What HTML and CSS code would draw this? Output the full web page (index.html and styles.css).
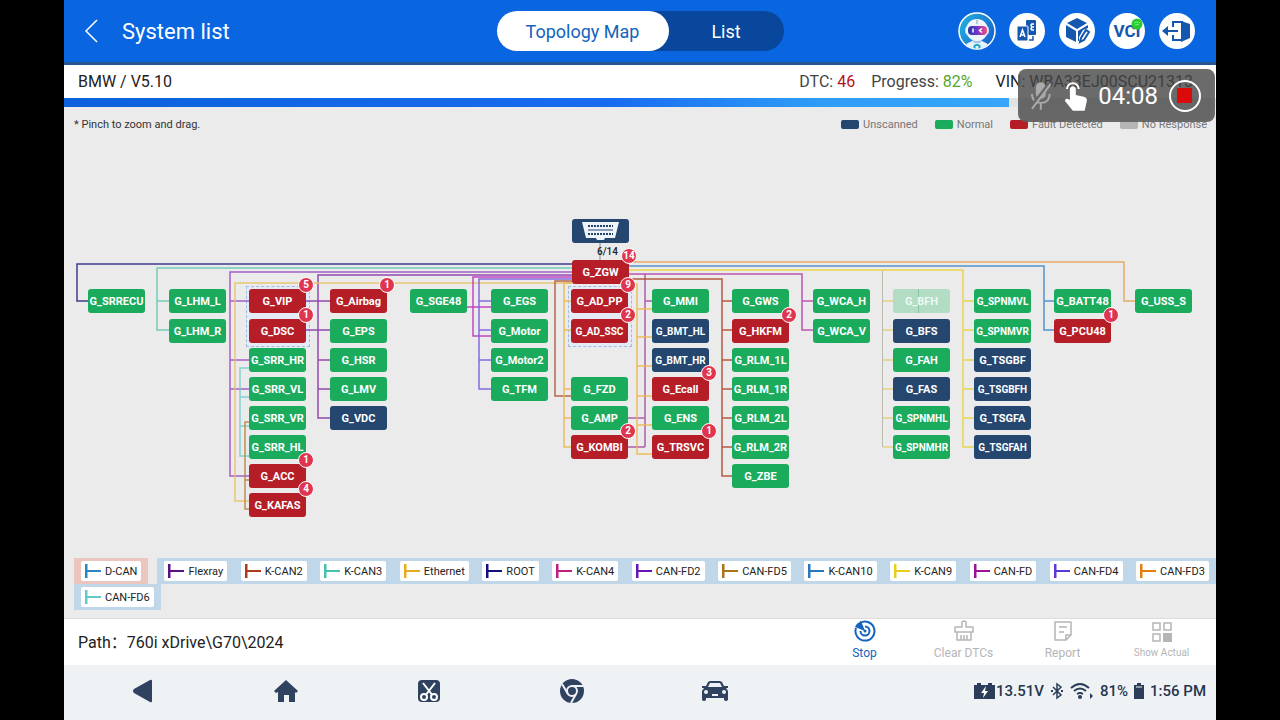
FILE: index.html
```html
<!DOCTYPE html>
<html lang="en">
<head>
  <meta charset="UTF-8" />
  <title>System list</title>
  <link rel="stylesheet" href="styles.css">
</head>
<body>
  <div class="screen">
    <header class="topbar">
      <div class="topbar-left">
        <button class="back" aria-label="Back">
          <svg width="14" height="24" viewBox="0 0 14 24"><path d="M13 1 L2 12 L13 23" fill="none" stroke="#fff" stroke-width="1.500"/></svg>
        </button>
        <h1>System list</h1>
      </div>
      <div class="tabs">
        <button class="tab active">Topology Map</button>
        <button class="tab">List</button>
      </div>
      <div class="tools">
        <button class="tool" aria-label="Assistant">
          <svg viewBox="0 0 38 38">
            <defs>
              <linearGradient id="sky" x1="0" y1="0" x2="1" y2="0.6"><stop offset="0" stop-color="#22b5dc"/><stop offset="1" stop-color="#1767cf"/></linearGradient>
              <linearGradient id="visor"><stop offset="0" stop-color="#2439a8"/><stop offset="0.5" stop-color="#7435ce"/><stop offset="1" stop-color="#fb4e79"/></linearGradient>
              <clipPath id="face"><circle cx="19" cy="19" r="17.500"/></clipPath>
            </defs>
            <circle cx="19" cy="19" r="18" fill="url(#sky)" stroke="#fff" stroke-width="1.500"/>
            <g clip-path="url(#face)">
              <path d="M5 38 Q6 30 19 28 Q32 30 33 38 Z" fill="#e8f2fc"/>
              <path d="M14 28 H24 L22 31 H16 Z" fill="#a9c5e4"/>
              <rect x="7" y="14" width="24" height="9" rx="4" fill="#c6dcf3"/>
              <ellipse cx="19" cy="18" rx="11" ry="11" fill="#f0f5fd"/>
              <rect x="10" y="14" width="19" height="9" rx="4" fill="url(#visor)"/>
              <path d="M15 16.500 V20.500 M24 16.500 L21.500 18.500 L24 20.500" stroke="#fff" stroke-width="1.500" fill="none"/>
              <path d="M19 8 V12" stroke="#a7bedb" stroke-width="1.500"/>
              <path d="M16.500 37 V34 Q19 31.500 21.500 34 V37" stroke="#18a8c6" stroke-width="2" fill="none"/>
            </g>
          </svg>
        </button>
        <button class="tool" aria-label="Translate">
          <svg viewBox="0 0 38 38">
            <circle cx="19" cy="19" r="18" fill="#fff"/>
            <rect x="18" y="8" width="10" height="15" rx="1" fill="#1557ae"/>
            <path d="M26 12 H24 Q22 13 24 15 H26 M24 15 Q22 17 24 18 H26" fill="none" stroke="#fff" stroke-width="1.500"/>
            <rect x="9" y="14" width="11" height="15" rx="1" fill="#1557ae" stroke="#fff"/>
            <path d="M12 25 L14.500 18 L17 25 M13 23 H16" fill="none" stroke="#fff" stroke-width="1.500"/>
            <path d="M21 28 H25 V24" fill="none" stroke="#1557ae" stroke-width="1.500"/>
          </svg>
        </button>
        <button class="tool" aria-label="Edit module">
          <svg viewBox="0 0 38 38">
            <circle cx="19" cy="19" r="18" fill="#fff"/>
            <path d="M9 11 L19 6 L29 11 L19 17 Z M8 13 L18 19 V30 L8 25 Z M20 19 L30 13 V16 L25 18 L21 25 V29 H20 Z" fill="#1557ae"/>
            <path d="M28 18 L31 20 L26 28 L22 30 L23 26 Z" fill="none" stroke="#1557ae" stroke-width="2"/>
          </svg>
        </button>
        <button class="tool" aria-label="VCI">
          <svg viewBox="0 0 38 38">
            <circle cx="19" cy="19" r="18" fill="#fff"/>
            <text class="vci" x="19" y="25" text-anchor="middle">VCI</text>
            <circle cx="29" cy="12" r="5.500" fill="#24cd2c"/>
            <path d="M26 11 Q29 9 32 11 M27 13 Q29 12 31 13" fill="none" stroke="#7bea7f"/>
          </svg>
        </button>
        <button class="tool" aria-label="Exit">
          <svg viewBox="0 0 38 38">
            <circle cx="19" cy="19" r="18" fill="#fff"/>
            <path d="M4 19 L10 14 V18 H20 V20 H10 V24 Z" fill="#1557ae"/>
            <path d="M15 15 V10 H25 M15 23 V28 H25" fill="none" stroke="#1557ae" stroke-width="2"/>
            <path d="M23 9 L32 12 V26 L23 30 Z" fill="#1557ae"/>
          </svg>
        </button>
      </div>
    </header>

    <div class="info">
      <span class="vehicle">BMW / V5.10</span>
      <span class="dtc">DTC: <b class="red">46</b></span>
      <span class="progress-text">Progress: <b class="green">82%</b></span>
      <span class="vin">VIN: WBA33EJ00SCU21313</span>
    </div>
    <div class="progress"><div class="progress-fill" style="width: 82%"></div></div>

    <main class="map">
      <div class="hint-row">
        <span class="hint">* Pinch to zoom and drag.</span>
        <span class="key"><i class="swatch unscanned"></i>Unscanned</span>
        <span class="key"><i class="swatch normal"></i>Normal</span>
        <span class="key"><i class="swatch fault"></i>Fault Detected</span>
        <span class="key"><i class="swatch none"></i>No Response</span>
      </div>

      <div class="canvas" id="canvas">
        <div class="group group-left"></div>
        <div class="group group-mid"></div>
        <svg class="wires" width="1152" height="416" viewBox="64 141 1152 416">
          <!-- left side buses -->
          <path stroke="#2b2a83" stroke-width="1.500" d="M572 264 H77 V301 H89"/>
          <path stroke="#67c9b0" d="M572 268 H157 V330 H169 M157 301 H169"/>
          <path stroke="#9b50c4" stroke-width="1.500" d="M572 272 H230 V476 H250 M230 301 H250 M230 360 H250 M230 389 H250"/>
          <path stroke="#8a35a8" stroke-width="1.500" d="M572 275 H318 V418 H330 M306 301 H330 M306 330 H330 M318 360 H330 M318 389 H330"/>
          <path stroke="#e9c268" d="M572 283 H235 V501 H250"/>
          <path stroke="#78cfcb" d="M250 368 H240 V456 H250 M240 397 H250 M240 426 H250"/>
          <path stroke="#b98441" d="M250 422 H245 V509 H250 M245 480 H250"/>
          <path stroke="#bd35bd" stroke-width="1.500" d="M572 277 H473 V336 H491 M467 307 H491"/>
          <path stroke="#7a5ddb" d="M572 279 H479 V389 H491 M479 301 H491 M479 330 H491 M479 360 H491"/>
          <path stroke="#b0583c" d="M572 281 H555 V396 H572"/>
          <path stroke="#eab74f" d="M572 283 H564 V447 H572 M564 301 H572 M564 330 H572 M564 389 H572 M564 418 H572"/>
          <!-- right side buses -->
          <path stroke="#e6a35a" d="M628 262 H1124 V301 H1136"/>
          <path stroke="#4388c8" d="M628 266 H1044 V330 H1055 M1044 301 H1055"/>
          <path stroke="#e8d968" stroke-width="2" d="M628 270 H963 V447 H975 M963 301 H975 M963 330 H975 M963 360 H975 M963 389 H975 M963 418 H975"/>
          <path stroke="#b7b6a6" stroke-width="1" d="M882.500 271 V447"/>
          <path stroke="#e3cf75" d="M883 301 H894 M883 330 H894 M883 360 H894 M883 389 H894 M883 418 H894 M883 447 H894"/>
          <path stroke="#b844ac" d="M628 274 H802 V330 H813 M802 301 H813"/>
          <path stroke="#a34fa4" d="M645 274 V447 M645 301 H653 M628 418 H645 M628 447 H645"/>
          <path stroke="#b3492f" d="M628 279 H722 V476 H733 M722 301 H733 M722 330 H733 M722 360 H733 M722 389 H733 M722 418 H733 M722 447 H733"/>
          <path stroke="#edb84c" stroke-width="1.500" d="M628 284 H637 V454 H653 M637 309 H653 M637 337 H653 M637 366 H653 M637 396 H653 M637 425 H653"/>
          <path stroke="#91a6ae" d="M600 243 V261"/>
        </svg>
        <button class="node unscanned" style="left: 508px; top: 78px" aria-label="OBD port">
          <svg width="37" height="18" viewBox="0 0 37 18">
            <path d="M0 0 H37 L33 16 H23 L22 18 H15 L14 16 H4 Z" fill="#eef4fa"/>
            <path d="M6 4 H31 M6 12 H31" stroke="#23456c" stroke-width="2" stroke-dasharray="2 1"/>
            <path d="M6 8 H31" stroke="#23456c"/>
          </svg>
        </button>
        <span class="pins">6/14</span>
      </div>

      <div class="buses">
        <div class="bus-row">
          <div class="bus-group can" id="dcan"></div>
          <div class="bus-group wide" id="busTop"></div>
        </div>
        <div class="bus-row">
          <div class="bus-group" id="busBottom"></div>
        </div>
      </div>
    </main>

    <div class="pathbar">
      <span class="path">Path：760i xDrive\G70\2024</span>
      <div class="actions">
        <button class="action on">
          <svg width="22" height="22" viewBox="0 0 22 22" fill="none" stroke="#1463bd" stroke-width="2">
            <path d="M6 3 A9.500 9.500 0 1 1 2 8"/><path d="M11 6.500 A4.500 4.500 0 1 1 6.500 11"/>
            <path d="M11 11 L1 7 Q3 3 7 1 Z" fill="#1463bd" stroke="none"/><circle cx="11" cy="11" r="1.500" fill="#1463bd" stroke="none"/>
          </svg>
          Stop
        </button>
        <button class="action">
          <svg width="22" height="22" viewBox="0 0 22 22" fill="none" stroke="#b5b5b5" stroke-width="1.500">
            <path d="M9 7 V2 Q11 0 13 2 V7 H20 V12 H2 V7 Z M4 12 V20 H18 V12 M8 15 V20 M11 15 V20 M14 15 V20" stroke-linejoin="round"/>
          </svg>
          Clear DTCs
        </button>
        <button class="action">
          <svg width="22" height="22" viewBox="0 0 22 22" fill="none" stroke="#b5b5b5" stroke-width="1.500">
            <path d="M3 2 H19 V15 L14 20 H3 Z M14 20 V15 H19 M7 7 H15 M7 12 H12" stroke-linejoin="round"/>
          </svg>
          Report
        </button>
        <button class="action small">
          <svg width="22" height="22" viewBox="0 0 22 22" fill="none" stroke="#b5b5b5" stroke-width="1.500">
            <path d="M2 3 H9 V10 H2 Z M13 3 H20 V10 H13 Z M2 14 H9 V21 H2 Z"/><path d="M12 13 H21 V22 H12 Z" fill="#b5b5b5" stroke="none"/>
          </svg>
          Show Actual
        </button>
      </div>
    </div>

    <nav class="navbar">
      <button class="nav-btn" aria-label="Back"><svg viewBox="0 0 28 28"><path d="M4 14 Q4 13 5 12 L21 3 Q23 2 23 4 V24 Q23 26 21 25 L5 16 Q4 15 4 14 Z" fill="#2f425f"/></svg></button>
      <button class="nav-btn" aria-label="Home"><svg viewBox="0 0 28 28"><path d="M14 3 L26 14 L24 16 L23 15 V25 H17 V18 H12 V25 H6 V15 L4 16 L2 14 Z" fill="#2f425f"/></svg></button>
      <button class="nav-btn" aria-label="Screenshot"><svg viewBox="0 0 28 28"><rect x="3" y="3" width="22" height="22" rx="4" fill="#2f425f"/><path d="M8 6 L18 19 M20 6 L10 19" stroke="#fff" stroke-width="2"/><g fill="#2f425f" stroke="#fff" stroke-width="2"><circle cx="9" cy="20" r="3"/><circle cx="19" cy="20" r="3"/></g></svg></button>
      <button class="nav-btn" aria-label="Browser"><svg viewBox="0 0 28 28"><circle cx="14" cy="14" r="12" fill="#2f425f"/><circle cx="14" cy="14" r="5" fill="none" stroke="#eff2f5" stroke-width="2"/><path d="M14 9 H25 M10 17 L4 7 M18 17 L13 26" stroke="#eff2f5" stroke-width="2"/></svg></button>
      <button class="nav-btn" aria-label="Vehicle"><svg viewBox="0 0 28 28"><path d="M7 5 Q8 4 10 4 H18 Q20 4 21 5 L23 9 H27 V11 H25 L27 14 V23 Q25 25 23 23 V21 H5 V23 Q3 25 1 23 V14 L3 11 H1 V9 H5 Z" fill="#2f425f"/><path d="M9 6 H19 L21 10 H7 Z" fill="#eff2f5"/><circle cx="5" cy="15" r="2" fill="#eff2f5"/><circle cx="23" cy="15" r="2" fill="#eff2f5"/><path d="M11 18 H17" stroke="#eff2f5" stroke-width="2"/></svg></button>
      <div class="status">
        <svg width="21" height="18" viewBox="0 0 21 18"><path d="M0 3 H3 V1 H7 V3 H14 V1 H18 V3 H21 V17 H0 Z" fill="#2b3d58"/><path d="M12 4 L7 11 H10 L9 16 L14 9 H11 Z" fill="#fff"/></svg>
        <span class="volts">13.51V</span>
        <svg class="bt" width="14" height="18" viewBox="0 0 14 18"><path d="M3 5 L11 13 L7 16 V2 L11 5 L3 13" fill="none" stroke="#2b3d58" stroke-width="1.500"/><path d="M1 9 H3 M11 9 H13" stroke="#2b3d58" stroke-width="2"/></svg>
        <svg class="wifi" width="24" height="18" viewBox="0 0 24 18"><path d="M1 6 Q10 -2 19 6 M4 9 Q10 4 16 9 M7 12 Q10 10 13 12" fill="none" stroke="#2b3d58" stroke-width="2"/><circle cx="10" cy="15" r="2" fill="#2b3d58"/><path d="M20 11 L23 14 L20 17 Z" fill="#2b3d58"/></svg>
        <span>81%</span>
        <svg class="battery" width="10" height="18" viewBox="0 0 10 18"><path d="M3 1 H7 V3 H10 V17 H0 V3 H3 Z" fill="#2b3d58"/><path d="M2 5 H8" stroke="#eff2f5"/></svg>
        <span>1:56 PM</span>
      </div>
    </nav>

    <div class="recorder">
      <svg class="mic" width="24" height="30" viewBox="0 0 24 30" fill="none" stroke="#aaa" stroke-width="2"><rect x="8" y="2" width="8" height="15" rx="4" fill="#aaa"/><path d="M3 13 Q3 22 12 22 Q21 22 21 13 M12 22 V29"/><path d="M22 1 L2 27" stroke="#666" stroke-width="4"/><path d="M22 3 L3 28"/></svg>
      <svg class="tap" width="24" height="32" viewBox="0 0 24 32"><path d="M3 9 A6 6 0 0 1 15 9" fill="none" stroke="#fff" stroke-width="2"/><path d="M6 8 Q9 4 12 8 V15 L21 17 Q24 18 23 22 L21 31 H9 L1 21 Q1 17 6 20 Z" fill="#fff"/></svg>
      <span class="time">04:08</span>
      <button class="stop-rec" aria-label="Stop recording"><i></i></button>
    </div>
  </div>

  <script>
    // n = normal, f = fault, u = unscanned, b = being scanned
    const columns = [
      ["n G_SRRECU"],
      ["n G_LHM_L", "n G_LHM_R"],
      ["f G_VIP 5", "f G_DSC 1", "n G_SRR_HR", "n G_SRR_VL", "n G_SRR_VR", "n G_SRR_HL", "f G_ACC 1", "f G_KAFAS 4"],
      ["f G_Airbag 1", "n G_EPS", "n G_HSR", "n G_LMV", "u G_VDC"],
      ["n G_SGE48"],
      ["n G_EGS", "n G_Motor", "n G_Motor2", "n G_TFM"],
      ["f G_AD_PP 9", "f G_AD_SSC 2", null, "n G_FZD", "n G_AMP", "f G_KOMBI 2"],
      ["n G_MMI", "u G_BMT_HL", "u G_BMT_HR", "f G_Ecall 3", "n G_ENS", "f G_TRSVC 1"],
      ["n G_GWS", "f G_HKFM 2", "n G_RLM_1L", "n G_RLM_1R", "n G_RLM_2L", "n G_RLM_2R", "n G_ZBE"],
      ["n G_WCA_H", "n G_WCA_V"],
      ["b G_BFH", "u G_BFS", "n G_FAH", "u G_FAS", "n G_SPNMHL", "n G_SPNMHR"],
      ["n G_SPNMVL", "n G_SPNMVR", "u G_TSGBF", "u G_TSGBFH", "u G_TSGFA", "u G_TSGFAH"],
      ["n G_BATT48", "f G_PCU48 1"],
      ["n G_USS_S"]
    ];
    const states = { n: "normal", f: "fault", u: "unscanned", b: "busy" };
    const canvas = document.getElementById("canvas");

    function addNode(text, left, top) {
      const [state, name, count] = text.split(" ");
      const node = document.createElement("button");
      node.className = "node " + states[state];
      if (/SPNM|BMT|AD_SSC|TSG.*H$/.test(name)) node.className += " long";
      node.style.left = left + "px";
      node.style.top = top + "px";
      node.append(name);
      if (count) {
        const badge = document.createElement("span");
        badge.className = "badge";
        badge.innerText = count;
        node.append(badge);
      }
      canvas.append(node);
    }

    addNode("f G_ZGW 14", 508, 119);
    columns.forEach((items, c) => {
      items.forEach((item, r) => {
        if (item) addNode(item, Math.round(24.4 + c * 80.5), Math.round(148.4 + r * 29.1));
      });
    });

    function addBus(id, name, color) {
      document.getElementById(id).insertAdjacentHTML("beforeend",
        `<button class="bus"><svg width="16" height="14" viewBox="0 0 16 14" stroke="${color}"><path d="M1 0 V14" stroke-width="3"/><path d="M1 7 H16" stroke-width="2"/></svg>${name}</button>`);
    }

    addBus("dcan", "D-CAN", "#2b86c6");
    [["Flexray", "#5a1184"], ["K-CAN2", "#ad3c18"], ["K-CAN3", "#44c2ad"], ["Ethernet", "#e6ac20"],
     ["ROOT", "#12107a"], ["K-CAN4", "#c01d83"], ["CAN-FD2", "#6715b5"], ["CAN-FD5", "#ad7417"],
     ["K-CAN10", "#2878bd"], ["K-CAN9", "#e8cf1b"], ["CAN-FD", "#9b1298"], ["CAN-FD4", "#5b39d4"],
     ["CAN-FD3", "#e57e0b"]].forEach(b => addBus("busTop", b[0], b[1]));
    addBus("busBottom", "CAN-FD6", "#5fcbc8");
  </script>
</body>
</html>
```
FILE: styles.css
```css
* {
  box-sizing: border-box;
}
body {
  margin: 0;
  background-color: #000;
  color: #222;
  font-family: Roboto, "Noto Sans CJK SC", sans-serif;
}
button {
  border: none;
  padding: 0;
  background: none;
  color: inherit;
  font-family: inherit;
  cursor: pointer;
}
.screen {
  position: relative;
  display: flex;
  flex-direction: column;
  width: 90%;
  min-height: 100vh;
  margin: 0 auto;
  background-color: #ebebeb;
}

/* top bar */
.topbar {
  display: grid;
  grid-template-columns: 1fr auto 1fr;
  align-items: center;
  height: 65px;
  padding: 0 20px;
  background-color: #0966e0;
  border-bottom: 3px solid #27568f;
  color: #fff;
}
.topbar-left {
  display: flex;
  align-items: center;
  gap: 24px;
}
.back {
  display: flex;
}
h1 {
  margin: 0;
  font-size: 22px;
  font-weight: 400;
}
.tabs {
  display: flex;
  border-radius: 20px;
  background-color: #08479b;
}
.tab {
  width: 115px;
  height: 40px;
  border-radius: 20px;
  font-size: 18px;
}
.tab.active {
  width: 172px;
  background-color: #fff;
  color: #1463bd;
}
.tools {
  display: flex;
  justify-content: flex-end;
  gap: 12px;
}
.tool, .tool svg {
  display: block;
  width: 38px;
  height: 38px;
}
.vci {
  fill: #1557ae;
  font-size: 17px;
  font-weight: 700;
}

/* vehicle info */
.info {
  display: flex;
  align-items: center;
  height: 33px;
  padding: 0 23px 0 14px;
  background-color: #fff;
  font-size: 16px;
  white-space: nowrap;
}
.info b {
  font-weight: 400;
}
.vehicle {
  flex: 1;
}
.dtc, .progress-text {
  color: #444;
}
.progress-text {
  margin: 0 23px 0 16px;
}
.info .red {
  color: #b5121b;
}
.info .green {
  color: #55a630;
}
.progress {
  height: 9px;
  background-color: #dfe3e6;
}
.progress-fill {
  height: 9px;
  background: linear-gradient(90deg, #0b62dc, #176cf0 58%, #2f9df6 80%, #36a5fb);
}

/* topology map */
.map {
  display: flex;
  flex: 1;
  flex-direction: column;
}
.hint-row {
  display: flex;
  align-items: center;
  gap: 17px;
  height: 34px;
  padding: 0 9px 0 10px;
  color: #777;
  font-size: 11px;
}
.hint {
  flex: 1;
  color: #333;
}
.key {
  display: flex;
  align-items: center;
  gap: 4px;
}
.swatch {
  width: 18px;
  height: 9px;
  border-radius: 2px;
}
.unscanned {
  background-color: #24466f;
}
.normal {
  background-color: #1bab5d;
}
.fault {
  background-color: #b51e27;
}
.none {
  background-color: #b5b5b5;
}
.busy {
  background: linear-gradient(90deg, #b3dcc5 44%, #87c5a5 44%, #87c5a5 46%, #b3dcc5 46%);
}
.canvas {
  position: relative;
  width: 1152px;
  height: 416px;
  margin: 0 auto;
}
.wires {
  position: absolute;
  left: 0;
  top: 0;
  fill: none;
  stroke-width: 1.5px;
}
.wires path {
  opacity: 0.9;
}
.group {
  position: absolute;
  top: 145px;
  width: 64px;
  height: 61px;
  border: 1px dashed #a0bddd;
  background-color: #e4ebf7;
}
.group-left {
  left: 182px;
}
.group-mid {
  left: 504px;
}
.node {
  position: absolute;
  display: flex;
  align-items: center;
  justify-content: center;
  width: 57px;
  height: 24px;
  border-radius: 3px;
  color: #fff;
  font-size: 11px;
  font-weight: 700;
}
.node.busy {
  color: #eef8f2;
}
.node.long {
  font-size: 10px;
}
.badge {
  position: absolute;
  top: -12px;
  right: -8px;
  z-index: 1;
  width: 16px;
  height: 16px;
  border: 1px solid #fff;
  border-radius: 50%;
  background-color: #df3550;
  font-size: 10px;
  line-height: 14px;
  text-align: center;
}
.pins {
  position: absolute;
  left: 533px;
  top: 105px;
  font-size: 10px;
  line-height: 12px;
  font-weight: 500;
}

/* bus legend */
.buses {
  padding: 1px 0 8px 10px;
}
.bus-row {
  display: flex;
  gap: 9px;
}
.bus-group {
  display: flex;
  gap: 8px;
  padding: 3px 7px;
  background-color: #bfd7e8;
}
.bus-group.can {
  background-color: #eac6bf;
}
.bus-group.wide {
  flex: 1;
  justify-content: space-between;
}
.bus {
  display: flex;
  align-items: center;
  gap: 4px;
  height: 20px;
  padding: 0 4px;
  border-radius: 2px;
  background-color: #fff;
  font-size: 11px;
  white-space: nowrap;
}

/* path and actions */
.pathbar {
  display: flex;
  align-items: center;
  justify-content: space-between;
  height: 47px;
  padding: 0 5px 2px 14px;
  border-top: 1px solid #ddd;
  background-color: #fff;
}
.path {
  font-size: 16px;
}
.actions {
  display: flex;
}
.action {
  display: flex;
  flex-direction: column;
  align-items: center;
  gap: 2px;
  width: 99px;
  height: 42px;
  color: #b5b5b5;
  font-size: 12px;
  line-height: 18px;
}
.action.on {
  color: #1463bd;
}
.action.small {
  font-size: 10px;
}

/* system bar */
.navbar {
  display: flex;
  align-items: center;
  height: 55px;
  padding: 0 10px 3px 7px;
  background-color: #eff2f5;
}
.nav-btn {
  width: 143px;
}
.nav-btn svg {
  display: block;
  width: 28px;
  height: 28px;
  margin: 0 auto;
}
.status {
  display: flex;
  align-items: center;
  gap: 6px;
  margin-left: auto;
  color: #26364d;
  font-size: 15px;
  font-weight: 500;
  white-space: nowrap;
}
.volts {
  margin-left: -5px;
}

/* screen recorder overlay */
.recorder {
  position: absolute;
  top: 69px;
  right: 1px;
  z-index: 2;
  display: flex;
  align-items: center;
  gap: 11px;
  width: 197px;
  height: 53px;
  padding: 0 12px 0 9px;
  border: 2px solid rgba(110, 110, 110, 0.6);
  border-radius: 8px;
  background-color: rgba(70, 70, 70, 0.8);
  color: #fff;
}
.time {
  font-size: 24px;
}
.stop-rec {
  display: flex;
  align-items: center;
  justify-content: center;
  flex: none;
  width: 32px;
  height: 32px;
  border: 2px solid #fff;
  border-radius: 50%;
}
.stop-rec i {
  width: 15px;
  height: 15px;
  background-color: #dc0b0b;
}
```
